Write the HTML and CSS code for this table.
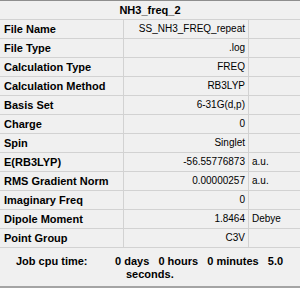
FILE: index.html
```html
<!DOCTYPE html>
<html>
<head>
<meta charset="utf-8">
<link rel="stylesheet" href="styles.css">
</head>
<body>
<div class="panel">
  <div class="title">NH3_freq_2</div>
  <div class="grid">
    <div class="row"><div class="label">File Name</div><div class="value">SS_NH3_FREQ_repeat</div><div class="unit"></div></div>
    <div class="row"><div class="label">File Type</div><div class="value">.log</div><div class="unit"></div></div>
    <div class="row"><div class="label">Calculation Type</div><div class="value">FREQ</div><div class="unit"></div></div>
    <div class="row"><div class="label">Calculation Method</div><div class="value">RB3LYP</div><div class="unit"></div></div>
    <div class="row"><div class="label">Basis Set</div><div class="value">6-31G(d,p)</div><div class="unit"></div></div>
    <div class="row"><div class="label">Charge</div><div class="value">0</div><div class="unit"></div></div>
    <div class="row"><div class="label">Spin</div><div class="value">Singlet</div><div class="unit"></div></div>
    <div class="row"><div class="label">E(RB3LYP)</div><div class="value">-56.55776873</div><div class="unit">a.u.</div></div>
    <div class="row"><div class="label">RMS Gradient Norm</div><div class="value">0.00000257</div><div class="unit">a.u.</div></div>
    <div class="row"><div class="label">Imaginary Freq</div><div class="value">0</div><div class="unit"></div></div>
    <div class="row"><div class="label">Dipole Moment</div><div class="value">1.8464</div><div class="unit">Debye</div></div>
    <div class="row"><div class="label">Point Group</div><div class="value">C3V</div><div class="unit"></div></div>
  </div>
  <div class="job">
    <div class="job-label">Job cpu time:</div>
    <div class="job-value">
      <span class="line1">0 days   0 hours   0 minutes   5.0</span>
      <span class="line2">seconds.</span>
    </div>
  </div>
</div>
</body>
</html>
```
FILE: styles.css
```css
html, body {
  margin: 0;
  padding: 0;
  background: #f0f0f0;
}
.panel {
  width: 300px;
  height: 288px;
  box-sizing: border-box;
  border-top: 1px solid #8e8e8e;
  border-bottom: 2px solid #a4a4a4;
  background: #f0f0f0;
  font-family: "Liberation Sans", Arial, sans-serif;
  color: #000;
  display: flex;
  flex-direction: column;
}
.title {
  height: 18px;
  line-height: 18px;
  font-size: 11px;
  font-weight: bold;
  text-align: center;
  border-bottom: 1px solid #d2d2d2;
}
.row {
  display: grid;
  grid-template-columns: 124px 125px 51px;
  height: 19px;
  box-sizing: border-box;
  border-bottom: 1px solid #d2d2d2;
}
.label, .value, .unit {
  line-height: 18px;
  white-space: nowrap;
  overflow: hidden;
}
.label {
  font-size: 11px;
  font-weight: bold;
  padding-left: 4px;
  border-right: 1px solid #d2d2d2;
}
.value {
  font-size: 10px;
  text-align: right;
  padding-right: 3px;
  border-right: 1px solid #d2d2d2;
}
.unit {
  font-size: 10px;
  padding-left: 3px;
}
.job {
  flex: 1;
  display: flex;
  padding-top: 7px;
  font-size: 11px;
  font-weight: bold;
  line-height: 13px;
}
.job-label {
  padding-left: 16px;
  width: 99px;
}
.job-value {
  display: flex;
  flex-direction: column;
}
.line1 {
  white-space: pre;
}
.line2 {
  padding-left: 11px;
}
```
